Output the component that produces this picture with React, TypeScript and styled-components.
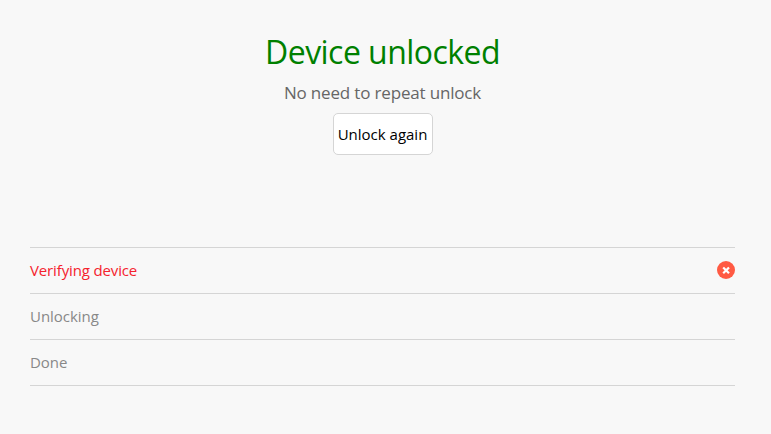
import React from "react";
import styled, { createGlobalStyle } from "styled-components";

const GlobalStyle = createGlobalStyle`
  body { margin: 0; background: #f8f8f8; font-family: "Open Sans", "Noto Sans", sans-serif; }
`;
const Page = styled.main`
  box-sizing: border-box;
  height: 434px;
  padding: 28px 36px 0 30px;
`;
const Header = styled.header`
  display: flex;
  flex-direction: column;
  align-items: center;
  height: 219px;
`;
const Title = styled.h1`
  margin: 0;
  font-size: 32px;
  line-height: 48px;
  font-weight: 400;
  letter-spacing: -0.55px;
  color: #008000;
  white-space: nowrap;
`;
const Subtitle = styled.p`
  margin: 4px 0 8px;
  font-size: 17px;
  line-height: 25px;
  letter-spacing: -0.17px;
  color: #666;
  white-space: nowrap;
`;
const UnlockButton = styled.button`
  box-sizing: border-box;
  width: 100px;
  height: 42px;
  padding: 0;
  border: 1px solid #d5d5d5;
  border-radius: 5px;
  background: #fff;
  color: #000;
  font: 400 15px "Open Sans", sans-serif;
  white-space: nowrap;
`;
const Steps = styled.ul`
  margin: 0;
  padding: 0;
  list-style: none;
  border-top: 1px solid #d5d5d5;
`;
const Step = styled.li<{ $failed?: boolean }>`
  display: flex;
  align-items: center;
  justify-content: space-between;
  box-sizing: border-box;
  height: 46px;
  padding-bottom: 1px;
  border-bottom: 1px solid #d5d5d5;
  font-size: 15px;
  letter-spacing: ${(p) => (p.$failed ? "-0.14px" : "-0.04px")};
  color: ${(p) => (p.$failed ? "#f5222d" : "#888")};
`;
const ErrorIcon = styled.svg`
  width: 18px;
  height: 18px;
`;

export default function App() {
  return (
    <Page>
      <GlobalStyle />
      <Header>
        <Title>Device unlocked</Title>
        <Subtitle>No need to repeat unlock</Subtitle>
        <UnlockButton>Unlock again</UnlockButton>
      </Header>
      <Steps>
        <Step $failed>
          <span>Verifying device</span>
          <ErrorIcon viewBox="0 0 18 18">
            <circle cx="9" cy="9" r="9" fill="#ff5a43" />
            <path d="M6.2 6.5l5.8 5.8M12 6.5l-5.8 5.8" stroke="#fff" strokeWidth="2.2" />
          </ErrorIcon>
        </Step>
        <Step>
          <span>Unlocking</span>
        </Step>
        <Step>
          <span>Done</span>
        </Step>
      </Steps>
    </Page>
  );
}
